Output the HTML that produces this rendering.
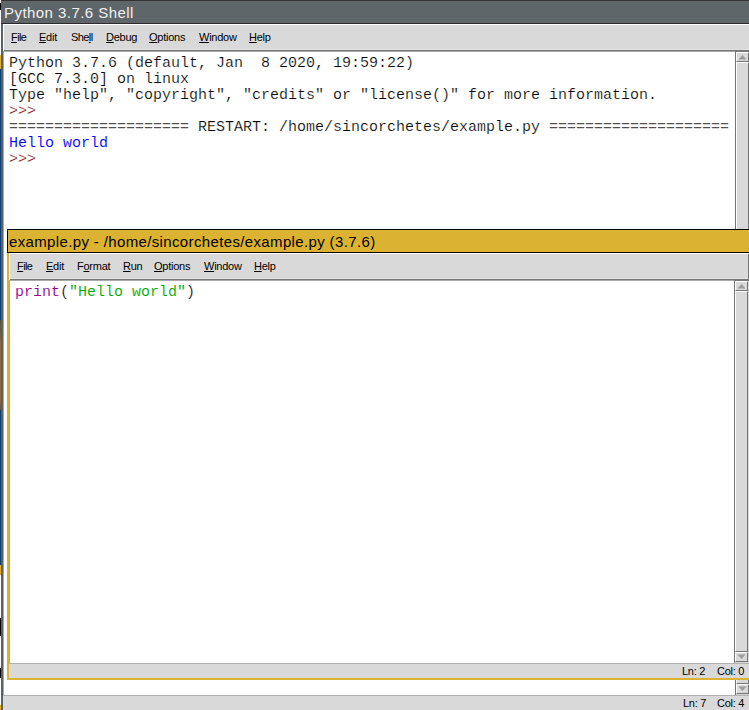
<!DOCTYPE html>
<html><head><meta charset="utf-8">
<style>
*{margin:0;padding:0;box-sizing:border-box}
html,body{width:749px;height:710px;overflow:hidden;background:#fff;position:relative}
.a{position:absolute}
.mono{font-family:"Liberation Mono",monospace;font-size:15px;line-height:16px;white-space:pre;color:#000;-webkit-text-stroke:0.2px #fff}
.ui{font-family:"Liberation Sans",sans-serif;font-size:11px;line-height:13px;white-space:pre;color:#000;letter-spacing:-0.25px}
.tt{font-family:"Liberation Sans",sans-serif;font-size:15px;line-height:18px;white-space:pre;letter-spacing:0.36px}
u{text-decoration:underline;text-decoration-thickness:1px;text-underline-offset:1px}
.m{position:absolute;top:0}
</style></head><body>
<!-- desktop column x=0 -->
<div class="a" style="left:0;top:0;width:1px;height:710px;background:linear-gradient(#fff 0,#fff 3px,#000 3px,#000 10px,#fff 10px,#fff 55px,#e0b030 55px,#e0b030 69px,#0f3f70 69px,#0f3f70 320px,#50503f 320px,#8a6a40 345px,#8a6a40 400px,#5a5040 410px,#0f3f70 410px,#0f3f70 565px,#e0b030 565px,#e0b030 575px,#fff 575px,#fff 618px,#000 618px,#000 636px,#fff 636px,#fff 668px,#000 668px,#000 678px,#fff 678px,#fff 705px,#e0b030 705px)"></div>

<!-- ===== SHELL WINDOW ===== -->
<div class="a" style="left:1px;top:0;width:748px;height:710px;background:#5b6164"></div>
<div class="a" style="left:1px;top:0;width:748px;height:1px;background:#333"></div>
<!-- title -->
<div class="a" style="left:2px;top:1px;width:747px;height:22px;background:#5f6669"></div>
<div class="a tt" style="left:4px;top:4px;color:#f0f0f0;letter-spacing:0.45px">Python 3.7.6 Shell</div>
<div class="a" style="left:1px;top:23px;width:748px;height:1px;background:#2b2b2b"></div>
<!-- menubar -->
<div class="a" style="left:3px;top:24px;width:746px;height:27px;background:#d9d9d9;border-top:1px solid #fff;border-left:1px solid #fff"></div>
<div class="a" style="left:4px;top:49px;width:745px;height:1px;background:#e2e2e2"></div>
<div class="a" style="left:4px;top:50px;width:745px;height:1px;background:#787878"></div>
<div class="a ui" style="left:0;top:31px;width:300px;height:14px">
 <span class="m" style="left:11px;letter-spacing:-0.6px"><u>F</u>ile</span>
 <span class="m" style="left:39px"><u>E</u>dit</span>
 <span class="m" style="left:71px;letter-spacing:-0.6px">She<u>l</u>l</span>
 <span class="m" style="left:106px"><u>D</u>ebug</span>
 <span class="m" style="left:149px"><u>O</u>ptions</span>
 <span class="m" style="left:199px"><u>W</u>indow</span>
 <span class="m" style="left:249px"><u>H</u>elp</span>
</div>
<!-- text area -->
<div class="a" style="left:3px;top:51px;width:732px;height:644px;background:#fff;border-top:1px solid #a9a9a9;border-left:1px solid #a9a9a9"></div>
<div class="a mono" style="left:9px;top:56px">Python 3.7.6 (default, Jan  8 2020, 19:59:22)
[GCC 7.3.0] on linux
Type "help", "copyright", "credits" or "license()" for more information.
<span style="color:#770000">&gt;&gt;&gt;</span> 
==================== RESTART: /home/sincorchetes/example.py ====================
<span style="color:#0000ff;-webkit-text-stroke:0.1px #fff">Hello world</span>
<span style="color:#770000">&gt;&gt;&gt;</span> </div>
<!-- shell scrollbar -->
<div class="a" style="left:735px;top:51px;width:14px;height:644px;background:#d9d9d9;border-left:1px solid #747474;border-top:1px solid #787878"></div>
<div class="a" style="left:736px;top:52px;width:13px;height:10px;background:#d9d9d9;border-top:1px solid #fff;border-left:1px solid #fff;border-right:1px solid #747474;border-bottom:1px solid #747474"></div>
<svg class="a" style="left:737px;top:53px" width="11" height="8"><polygon points="1.5,6.5 5.5,2 9.5,6.5" fill="#9c9c9c"/></svg>
<div class="a" style="left:736px;top:62px;width:13px;height:622px;background:#d9d9d9;border-top:1px solid #fff;border-left:1px solid #fff;border-right:1px solid #747474;border-bottom:1px solid #747474"></div>
<div class="a" style="left:736px;top:684px;width:13px;height:10px;background:#d9d9d9;border-top:1px solid #fff;border-left:1px solid #fff;border-right:1px solid #747474;border-bottom:1px solid #747474"></div>
<svg class="a" style="left:737px;top:685px" width="11" height="8"><polygon points="1.5,1.5 5.5,6 9.5,1.5" fill="#9c9c9c"/></svg>
<!-- shell status -->
<div class="a" style="left:3px;top:695px;width:746px;height:15px;background:#d9d9d9;border-top:1px solid #b2b2b2"></div>
<div class="a ui" style="left:683px;top:697px">Ln: 7</div>
<div class="a ui" style="left:717px;top:697px">Col: 4</div>

<!-- ===== EDITOR WINDOW ===== -->
<div class="a" style="left:7px;top:229px;width:742px;height:451px;background:#dcb232"></div>
<!-- title -->
<div class="a" style="left:7px;top:229px;width:742px;height:24px;background:#dcb232;border:1px solid #000;border-right:none"></div>
<div class="a tt" style="left:9px;top:233px;color:#000">example.py - /home/sincorchetes/example.py (3.7.6)</div>
<!-- menubar -->
<div class="a" style="left:9px;top:253px;width:740px;height:27px;background:#d9d9d9;border-top:1px solid #fff;border-left:1px solid #fff"></div>
<div class="a" style="left:10px;top:278px;width:739px;height:1px;background:#e2e2e2"></div>
<div class="a" style="left:10px;top:279px;width:739px;height:1px;background:#787878"></div>
<div class="a" style="left:748px;top:254px;width:1px;height:26px;background:#787878"></div>
<div class="a ui" style="left:0;top:260px;width:300px;height:14px">
 <span class="m" style="left:17px;letter-spacing:-0.6px"><u>F</u>ile</span>
 <span class="m" style="left:46px"><u>E</u>dit</span>
 <span class="m" style="left:77px">F<u>o</u>rmat</span>
 <span class="m" style="left:123px"><u>R</u>un</span>
 <span class="m" style="left:154px"><u>O</u>ptions</span>
 <span class="m" style="left:204px"><u>W</u>indow</span>
 <span class="m" style="left:254px"><u>H</u>elp</span>
</div>
<!-- text -->
<div class="a" style="left:9px;top:280px;width:725px;height:383px;background:#fff;border-left:1px solid #a3a6ae;border-top:1px solid #a9a9a9"></div>
<div class="a mono" style="left:15px;top:285px"><span style="color:#900090;-webkit-text-stroke:0.1px #fff">print</span>(<span style="color:#00aa00;-webkit-text-stroke:0.1px #fff">"Hello world"</span>)</div>
<!-- editor scrollbar -->
<div class="a" style="left:734px;top:280px;width:15px;height:383px;background:#d9d9d9;border-left:1px solid #747474;border-top:1px solid #787878"></div>
<div class="a" style="left:735px;top:281px;width:13px;height:10px;background:#d9d9d9;border-top:1px solid #fff;border-left:1px solid #fff;border-right:1px solid #747474;border-bottom:1px solid #747474"></div>
<svg class="a" style="left:736px;top:282px" width="11" height="8"><polygon points="1.5,6.5 5.5,2 9.5,6.5" fill="#9c9c9c"/></svg>
<div class="a" style="left:735px;top:291px;width:13px;height:361px;background:#d9d9d9;border-top:1px solid #fff;border-left:1px solid #fff;border-right:1px solid #747474;border-bottom:1px solid #747474"></div>
<div class="a" style="left:735px;top:652px;width:13px;height:10px;background:#d9d9d9;border-top:1px solid #fff;border-left:1px solid #fff;border-right:1px solid #747474;border-bottom:1px solid #747474"></div>
<svg class="a" style="left:736px;top:653px" width="11" height="8"><polygon points="1.5,1.5 5.5,6 9.5,1.5" fill="#9c9c9c"/></svg>
<!-- editor status -->
<div class="a" style="left:9px;top:663px;width:740px;height:15px;background:#d9d9d9;border-top:1px solid #b2b2b2"></div>
<div class="a ui" style="left:682px;top:665px">Ln: 2</div>
<div class="a ui" style="left:717px;top:665px">Col: 0</div>
</body></html>
